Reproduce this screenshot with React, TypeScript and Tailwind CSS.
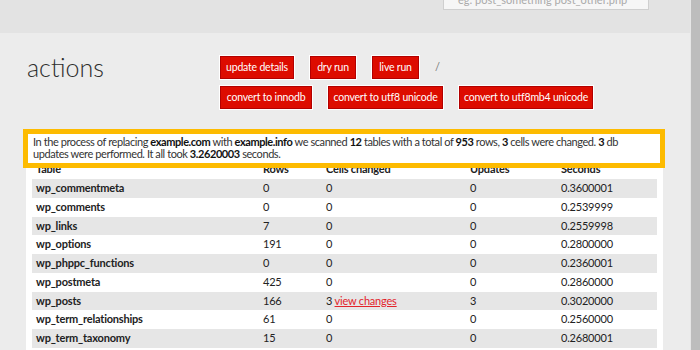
import React from 'react';

const ROWS = [
  { name: 'wp_commentmeta', rows: '0', cells: '0', updates: '0', seconds: '0.3600001' },
  { name: 'wp_comments', rows: '0', cells: '0', updates: '0', seconds: '0.2539999' },
  { name: 'wp_links', rows: '7', cells: '0', updates: '0', seconds: '0.2559998' },
  { name: 'wp_options', rows: '191', cells: '0', updates: '0', seconds: '0.2800000' },
  { name: 'wp_phppc_functions', rows: '0', cells: '0', updates: '0', seconds: '0.2360001' },
  { name: 'wp_postmeta', rows: '425', cells: '0', updates: '0', seconds: '0.2860000' },
  { name: 'wp_posts', rows: '166', cells: '3', updates: '3', seconds: '0.3020000', changes: true },
  { name: 'wp_term_relationships', rows: '61', cells: '0', updates: '0', seconds: '0.2560000' },
  { name: 'wp_term_taxonomy', rows: '15', cells: '0', updates: '0', seconds: '0.2680001' },
];

const Btn = ({ label, w }: { label: string; w: string }) => (
  <button
    className={`${w} h-[23px] bg-[#dd0c00] border border-[#b30000] ring-1 ring-white text-white text-[10.5px] tracking-[-0.2px] leading-none whitespace-nowrap`}
  >
    {label}
  </button>
);

export default function App() {
  return (
    <div className="flex w-[700px] h-[350px] overflow-hidden bg-[#ececec] font-['Lato',sans-serif] text-[#333]">
      <div className="flex-1 flex flex-col">
        {/* top bar with search field */}
        <div className="h-[33px] bg-[#e3e3e3] flex justify-end pr-[41px]">
          <div className="w-[206px] h-[22px] -mt-[12px] bg-[#f6f6f6] border border-[#cfcfcf] px-[14px] pt-[5px] text-[11px] text-[#aaa] leading-none whitespace-nowrap overflow-hidden">
            eg: post_something post_other.php
          </div>
        </div>

        {/* actions header */}
        <div className="flex pt-[23px]">
          <h1 className="w-[220px] pl-[27px] text-[25px] font-light leading-none text-[#2e2e2e] -mt-[1px]">actions</h1>
          <div className="flex flex-col gap-[7px]">
            <div className="flex items-center gap-4">
              <Btn label="update details" w="w-[74px]" />
              <Btn label="dry run" w="w-[46px]" />
              <Btn label="live run" w="w-[47px]" />
              <span className="text-[11px] text-[#777]">/</span>
            </div>
            <div className="flex gap-4">
              <Btn label="convert to innodb" w="w-[92px]" />
              <Btn label="convert to utf8 unicode" w="w-[115px]" />
              <Btn label="convert to utf8mb4 unicode" w="w-[134px]" />
            </div>
          </div>
        </div>

        {/* results panel */}
        <div className="relative ml-[26px] w-[637px] mt-[22px] bg-white px-[6px] pt-[5px] flex-1">
          <p className="pl-[1px] text-[11px] tracking-[-0.42px] leading-[12px] text-[#333] whitespace-nowrap">
            In the process of replacing <b className="text-[#111]">example.com</b> with{' '}
            <b className="text-[#111]">example.info</b> we scanned <b className="text-[#111]">12</b> tables with a total of{' '}
            <b className="text-[#111]">953</b> rows, <b className="text-[#111]">3</b> cells were changed.{' '}
            <b className="text-[#111]">3</b> db
            <br />
            updates were performed. It all took <b className="text-[#111]">3.2620003</b> seconds.
          </p>

          <div className="text-[11px] tracking-[-0.2px] text-[#222]">
            <div className="grid grid-cols-[227px_63px_144px_91px_1fr] h-[19px] items-center font-bold">
              <div className="pl-1">Table</div>
              <div className="pl-1">Rows</div>
              <div className="pl-1">Cells changed</div>
              <div className="pl-1">Updates</div>
              <div className="pl-1">Seconds</div>
            </div>
            {ROWS.map((r, i) => (
              <div
                key={r.name}
                className={`grid grid-cols-[227px_63px_144px_91px_1fr] h-[18.75px] items-center ${i % 2 === 0 ? 'bg-[#e6e6e6]' : 'bg-white'}`}
              >
                <div className="pl-1 font-bold">{r.name}</div>
                <div className="pl-1">{r.rows}</div>
                <div className="pl-1">
                  {r.cells}
                  {r.changes && (
                    <>
                      {' '}
                      <a className="text-[#e3242b] underline">view changes</a>
                    </>
                  )}
                </div>
                <div className="pl-1">{r.updates}</div>
                <div className="pl-1">{r.seconds}</div>
              </div>
            ))}
          </div>

          {/* highlight around the summary */}
          <div className="absolute -left-[3px] -right-[2px] -top-[2px] h-[39px] border-[5px] border-[#fdbb00] pointer-events-none" />
        </div>
      </div>

      {/* scrollbar */}
      <div className="w-[10px] h-full bg-[#bdbdbd] border-l border-[#e6e6e6]" />
    </div>
  );
}
